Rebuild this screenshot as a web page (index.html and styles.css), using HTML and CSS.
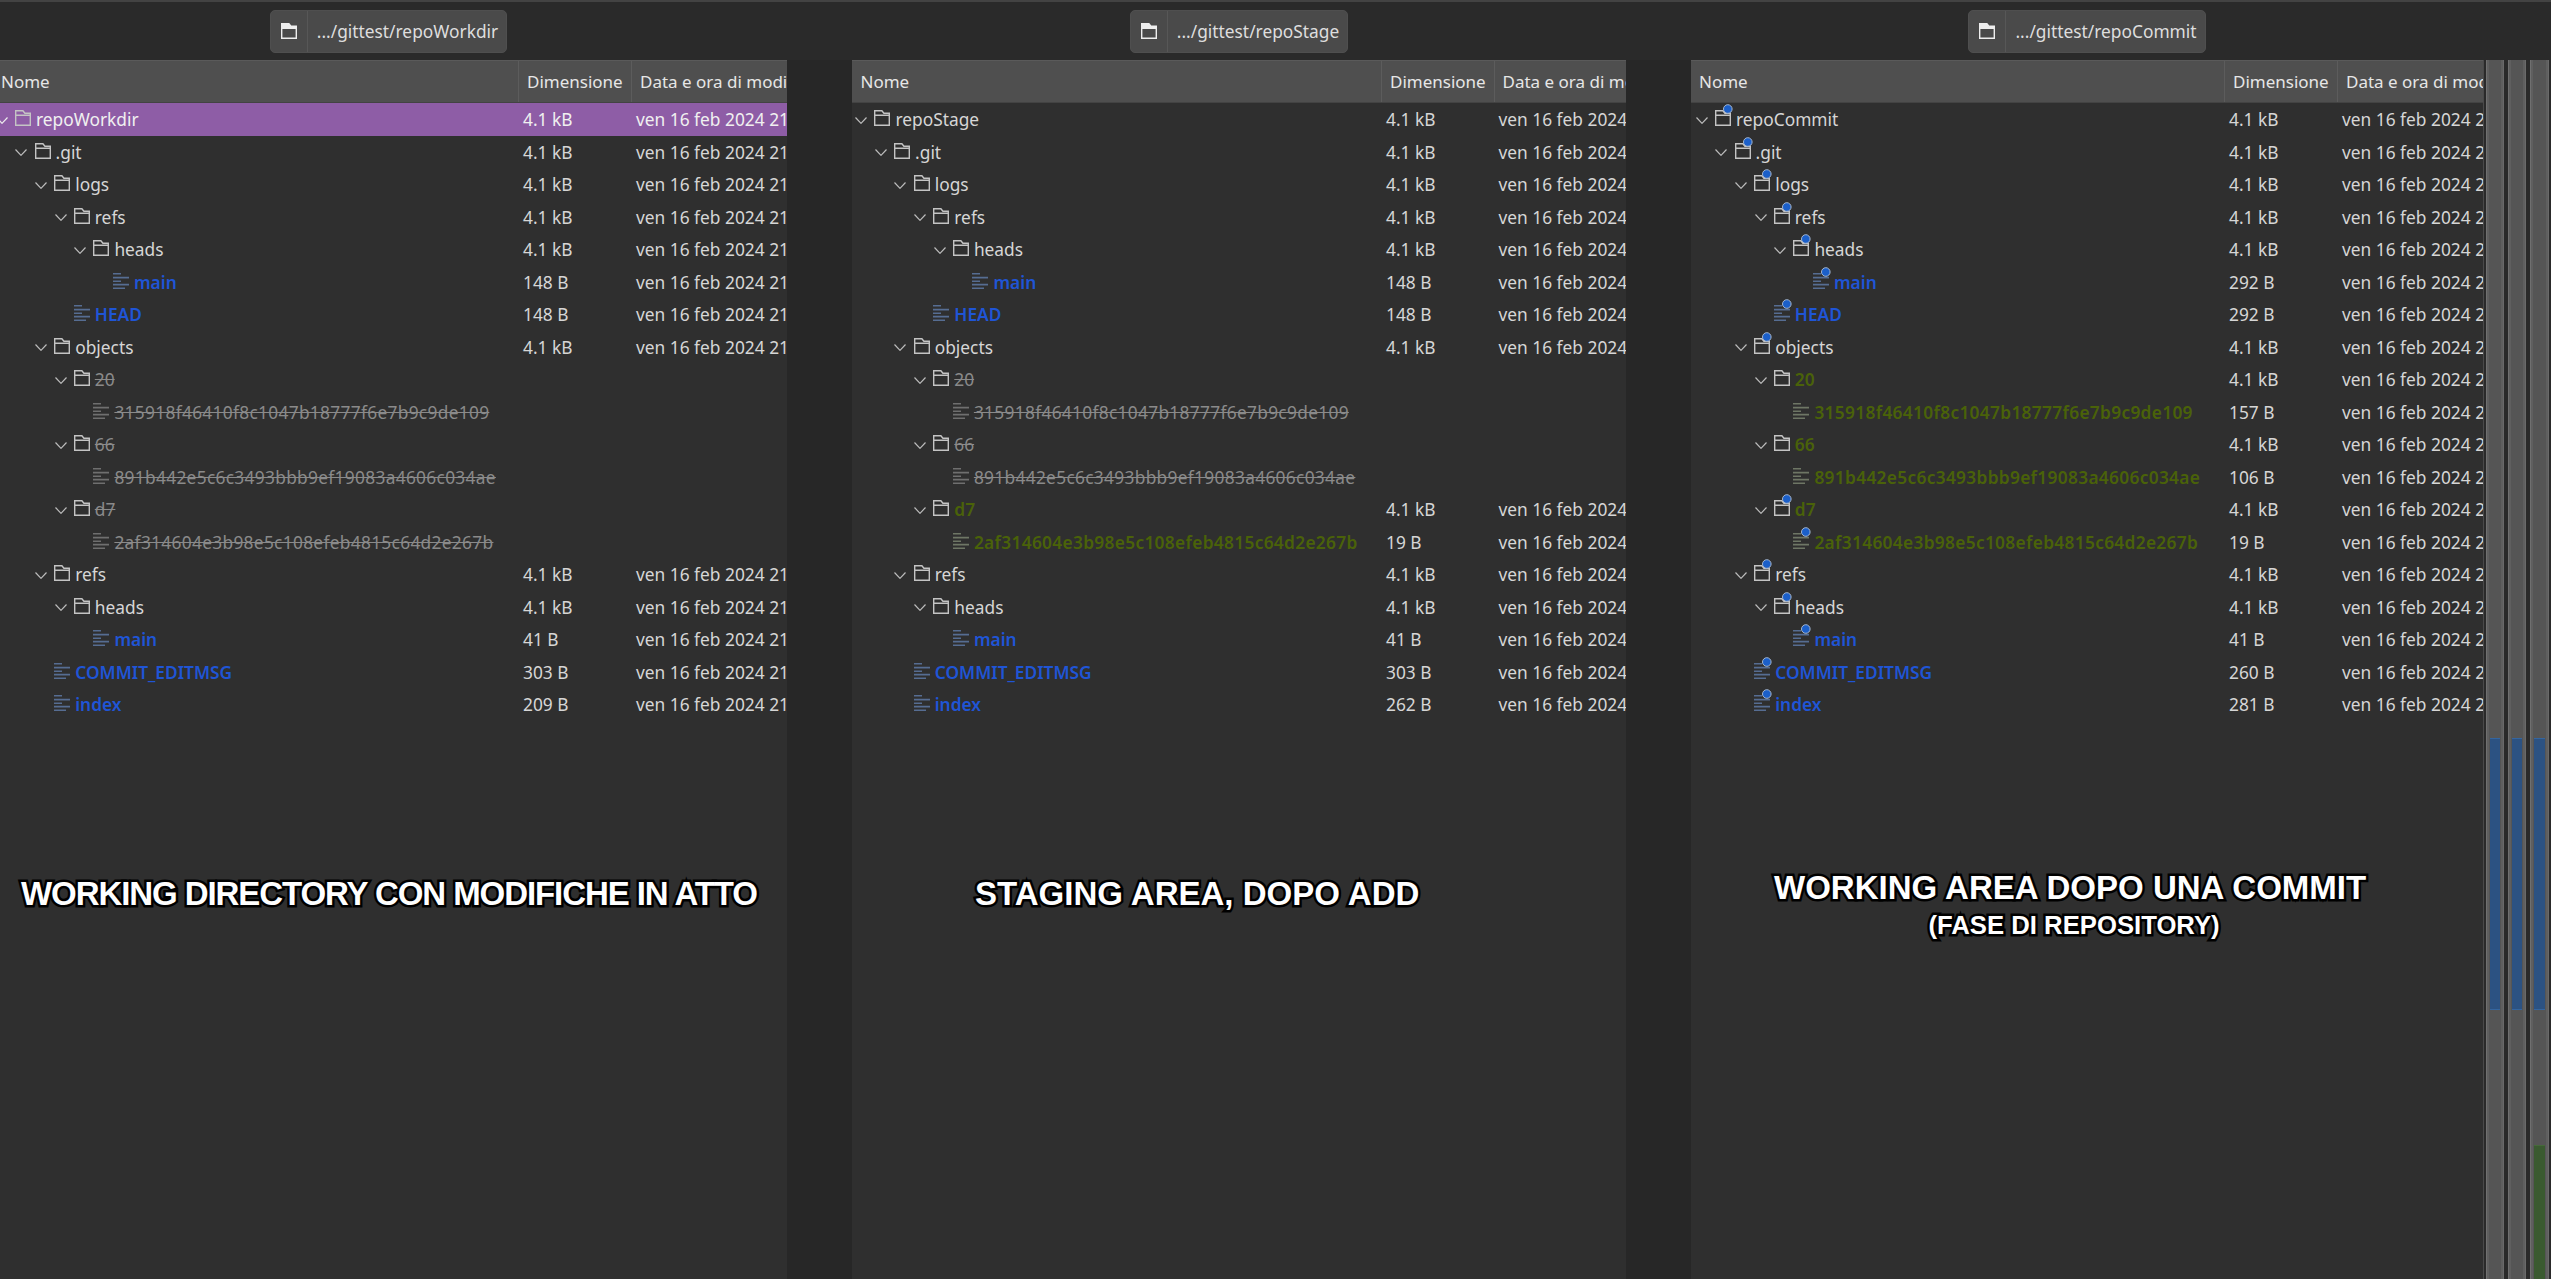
FILE: index.html
```html
<!DOCTYPE html>
<html lang="it">

<head>
    <meta charset="UTF-8">
    <meta name="viewport" content="width=device-width, initial-scale=1.0">
    <title>Confronto cartelle git</title>
    <link rel="stylesheet" href="styles.css">
</head>

<body>
    <svg class="defs" width="0" height="0">
        <symbol id="chev" viewBox="0 0 12 7"><path d="M.5.5 6 6.3 11.5.5" fill="none" stroke="currentColor" stroke-width="1.2"/></symbol>
        <symbol id="folder" viewBox="0 0 16 16" overflow="visible"><path d="M.7 15.3V.7h7.2l2 2.6h5.4v12zM.7 5.2h14.6" fill="none" stroke="currentColor" stroke-width="1.4"/></symbol>
        <symbol id="file" viewBox="0 0 16 16" overflow="visible"><path d="M0 .8h8M0 4.6h16M0 8.2h8M0 11.6h16M0 15.2h12" fill="none" stroke="currentColor" stroke-width="1.6"/></symbol>
        <symbol id="dot" viewBox="0 0 16 16" overflow="visible"><circle cx="12.8" cy="-1" r="4.3" fill="#1b5fc9" stroke="#a4b6cf" stroke-width="1"/></symbol>
        <symbol id="place" viewBox="0 0 16 16"><path d="M.7 15.3V.7h7.2l2 2.6h5.4v12z" fill="none" stroke="#eee" stroke-width="1.4"/><path d="M1 1h7l2 2.6h5V6H1z" fill="#eee"/></symbol>
    </svg>

    <div class="app">
        <div class="path-cell">
            <div class="path-btn"><span class="path-ico"><svg><use href="#place"/></svg></span><span class="path-text">.../gittest/repoWorkdir</span></div>
        </div>
        <div class="gutter-top"></div>
        <div class="path-cell">
            <div class="path-btn"><span class="path-ico"><svg><use href="#place"/></svg></span><span class="path-text">.../gittest/repoStage</span></div>
        </div>
        <div class="gutter-top"></div>
        <div class="path-cell">
            <div class="path-btn"><span class="path-ico"><svg><use href="#place"/></svg></span><span class="path-text">.../gittest/repoCommit</span></div>
        </div>
        <div class="gutter-top"></div>

        <!-- working dir -->
        <section class="pane pane-work">
            <div class="row head"><div>Nome</div><div>Dimensione</div><div>Data e ora di modifica</div></div>
            <div class="row selected"><div class="name d0"><span class="twisty"><svg><use href="#chev"/></svg></span><svg class="ico"><use href="#folder"/></svg><span>repoWorkdir</span></div><div class="size">4.1 kB</div><div class="date">ven 16 feb 2024 21</div></div>
            <div class="row"><div class="name d1"><span class="twisty"><svg><use href="#chev"/></svg></span><svg class="ico"><use href="#folder"/></svg><span>.git</span></div><div class="size">4.1 kB</div><div class="date">ven 16 feb 2024 21</div></div>
            <div class="row"><div class="name d2"><span class="twisty"><svg><use href="#chev"/></svg></span><svg class="ico"><use href="#folder"/></svg><span>logs</span></div><div class="size">4.1 kB</div><div class="date">ven 16 feb 2024 21</div></div>
            <div class="row"><div class="name d3"><span class="twisty"><svg><use href="#chev"/></svg></span><svg class="ico"><use href="#folder"/></svg><span>refs</span></div><div class="size">4.1 kB</div><div class="date">ven 16 feb 2024 21</div></div>
            <div class="row"><div class="name d4"><span class="twisty"><svg><use href="#chev"/></svg></span><svg class="ico"><use href="#folder"/></svg><span>heads</span></div><div class="size">4.1 kB</div><div class="date">ven 16 feb 2024 21</div></div>
            <div class="row"><div class="name d5 ignored"><span class="twisty"></span><svg class="ico"><use href="#file"/></svg><span>main</span></div><div class="size">148 B</div><div class="date">ven 16 feb 2024 21</div></div>
            <div class="row"><div class="name d3 ignored"><span class="twisty"></span><svg class="ico"><use href="#file"/></svg><span>HEAD</span></div><div class="size">148 B</div><div class="date">ven 16 feb 2024 21</div></div>
            <div class="row"><div class="name d2"><span class="twisty"><svg><use href="#chev"/></svg></span><svg class="ico"><use href="#folder"/></svg><span>objects</span></div><div class="size">4.1 kB</div><div class="date">ven 16 feb 2024 21</div></div>
            <div class="row"><div class="name d3 gone"><span class="twisty"><svg><use href="#chev"/></svg></span><svg class="ico"><use href="#folder"/></svg><span>20</span></div></div>
            <div class="row"><div class="name d4 gone"><span class="twisty"></span><svg class="ico"><use href="#file"/></svg><span class="hash">315918f46410f8c1047b18777f6e7b9c9de109</span></div></div>
            <div class="row"><div class="name d3 gone"><span class="twisty"><svg><use href="#chev"/></svg></span><svg class="ico"><use href="#folder"/></svg><span>66</span></div></div>
            <div class="row"><div class="name d4 gone"><span class="twisty"></span><svg class="ico"><use href="#file"/></svg><span class="hash">891b442e5c6c3493bbb9ef19083a4606c034ae</span></div></div>
            <div class="row"><div class="name d3 gone"><span class="twisty"><svg><use href="#chev"/></svg></span><svg class="ico"><use href="#folder"/></svg><span>d7</span></div></div>
            <div class="row"><div class="name d4 gone"><span class="twisty"></span><svg class="ico"><use href="#file"/></svg><span class="hash">2af314604e3b98e5c108efeb4815c64d2e267b</span></div></div>
            <div class="row"><div class="name d2"><span class="twisty"><svg><use href="#chev"/></svg></span><svg class="ico"><use href="#folder"/></svg><span>refs</span></div><div class="size">4.1 kB</div><div class="date">ven 16 feb 2024 21</div></div>
            <div class="row"><div class="name d3"><span class="twisty"><svg><use href="#chev"/></svg></span><svg class="ico"><use href="#folder"/></svg><span>heads</span></div><div class="size">4.1 kB</div><div class="date">ven 16 feb 2024 21</div></div>
            <div class="row"><div class="name d4 ignored"><span class="twisty"></span><svg class="ico"><use href="#file"/></svg><span>main</span></div><div class="size">41 B</div><div class="date">ven 16 feb 2024 21</div></div>
            <div class="row"><div class="name d2 ignored"><span class="twisty"></span><svg class="ico"><use href="#file"/></svg><span>COMMIT_EDITMSG</span></div><div class="size">303 B</div><div class="date">ven 16 feb 2024 21</div></div>
            <div class="row"><div class="name d2 ignored"><span class="twisty"></span><svg class="ico"><use href="#file"/></svg><span>index</span></div><div class="size">209 B</div><div class="date">ven 16 feb 2024 21</div></div>
            <div class="caption cap-work">WORKING DIRECTORY CON MODIFICHE IN ATTO</div>
        </section>
        <div class="gutter"></div>

        <!-- stage -->
        <section class="pane pane-stage">
            <div class="row head"><div>Nome</div><div>Dimensione</div><div>Data e ora di modifica</div></div>
            <div class="row"><div class="name d0"><span class="twisty"><svg><use href="#chev"/></svg></span><svg class="ico"><use href="#folder"/></svg><span>repoStage</span></div><div class="size">4.1 kB</div><div class="date">ven 16 feb 2024 21</div></div>
            <div class="row"><div class="name d1"><span class="twisty"><svg><use href="#chev"/></svg></span><svg class="ico"><use href="#folder"/></svg><span>.git</span></div><div class="size">4.1 kB</div><div class="date">ven 16 feb 2024 21</div></div>
            <div class="row"><div class="name d2"><span class="twisty"><svg><use href="#chev"/></svg></span><svg class="ico"><use href="#folder"/></svg><span>logs</span></div><div class="size">4.1 kB</div><div class="date">ven 16 feb 2024 21</div></div>
            <div class="row"><div class="name d3"><span class="twisty"><svg><use href="#chev"/></svg></span><svg class="ico"><use href="#folder"/></svg><span>refs</span></div><div class="size">4.1 kB</div><div class="date">ven 16 feb 2024 21</div></div>
            <div class="row"><div class="name d4"><span class="twisty"><svg><use href="#chev"/></svg></span><svg class="ico"><use href="#folder"/></svg><span>heads</span></div><div class="size">4.1 kB</div><div class="date">ven 16 feb 2024 21</div></div>
            <div class="row"><div class="name d5 ignored"><span class="twisty"></span><svg class="ico"><use href="#file"/></svg><span>main</span></div><div class="size">148 B</div><div class="date">ven 16 feb 2024 21</div></div>
            <div class="row"><div class="name d3 ignored"><span class="twisty"></span><svg class="ico"><use href="#file"/></svg><span>HEAD</span></div><div class="size">148 B</div><div class="date">ven 16 feb 2024 21</div></div>
            <div class="row"><div class="name d2"><span class="twisty"><svg><use href="#chev"/></svg></span><svg class="ico"><use href="#folder"/></svg><span>objects</span></div><div class="size">4.1 kB</div><div class="date">ven 16 feb 2024 21</div></div>
            <div class="row"><div class="name d3 gone"><span class="twisty"><svg><use href="#chev"/></svg></span><svg class="ico"><use href="#folder"/></svg><span>20</span></div></div>
            <div class="row"><div class="name d4 gone"><span class="twisty"></span><svg class="ico"><use href="#file"/></svg><span class="hash">315918f46410f8c1047b18777f6e7b9c9de109</span></div></div>
            <div class="row"><div class="name d3 gone"><span class="twisty"><svg><use href="#chev"/></svg></span><svg class="ico"><use href="#folder"/></svg><span>66</span></div></div>
            <div class="row"><div class="name d4 gone"><span class="twisty"></span><svg class="ico"><use href="#file"/></svg><span class="hash">891b442e5c6c3493bbb9ef19083a4606c034ae</span></div></div>
            <div class="row"><div class="name d3 added"><span class="twisty"><svg><use href="#chev"/></svg></span><svg class="ico"><use href="#folder"/></svg><span>d7</span></div><div class="size">4.1 kB</div><div class="date">ven 16 feb 2024 21</div></div>
            <div class="row"><div class="name d4 added"><span class="twisty"></span><svg class="ico"><use href="#file"/></svg><span class="hash">2af314604e3b98e5c108efeb4815c64d2e267b</span></div><div class="size">19 B</div><div class="date">ven 16 feb 2024 21</div></div>
            <div class="row"><div class="name d2"><span class="twisty"><svg><use href="#chev"/></svg></span><svg class="ico"><use href="#folder"/></svg><span>refs</span></div><div class="size">4.1 kB</div><div class="date">ven 16 feb 2024 21</div></div>
            <div class="row"><div class="name d3"><span class="twisty"><svg><use href="#chev"/></svg></span><svg class="ico"><use href="#folder"/></svg><span>heads</span></div><div class="size">4.1 kB</div><div class="date">ven 16 feb 2024 21</div></div>
            <div class="row"><div class="name d4 ignored"><span class="twisty"></span><svg class="ico"><use href="#file"/></svg><span>main</span></div><div class="size">41 B</div><div class="date">ven 16 feb 2024 21</div></div>
            <div class="row"><div class="name d2 ignored"><span class="twisty"></span><svg class="ico"><use href="#file"/></svg><span>COMMIT_EDITMSG</span></div><div class="size">303 B</div><div class="date">ven 16 feb 2024 21</div></div>
            <div class="row"><div class="name d2 ignored"><span class="twisty"></span><svg class="ico"><use href="#file"/></svg><span>index</span></div><div class="size">262 B</div><div class="date">ven 16 feb 2024 21</div></div>
            <div class="caption cap-stage">STAGING AREA, DOPO ADD</div>
        </section>
        <div class="gutter"></div>

        <!-- commit, quasi tutto con il pallino blu -->
        <section class="pane pane-commit">
            <div class="row head"><div>Nome</div><div>Dimensione</div><div>Data e ora di modifica</div></div>
            <div class="row"><div class="name d0"><span class="twisty"><svg><use href="#chev"/></svg></span><svg class="ico"><use href="#folder"/><use href="#dot"/></svg><span>repoCommit</span></div><div class="size">4.1 kB</div><div class="date">ven 16 feb 2024 21</div></div>
            <div class="row"><div class="name d1"><span class="twisty"><svg><use href="#chev"/></svg></span><svg class="ico"><use href="#folder"/><use href="#dot"/></svg><span>.git</span></div><div class="size">4.1 kB</div><div class="date">ven 16 feb 2024 21</div></div>
            <div class="row"><div class="name d2"><span class="twisty"><svg><use href="#chev"/></svg></span><svg class="ico"><use href="#folder"/><use href="#dot"/></svg><span>logs</span></div><div class="size">4.1 kB</div><div class="date">ven 16 feb 2024 21</div></div>
            <div class="row"><div class="name d3"><span class="twisty"><svg><use href="#chev"/></svg></span><svg class="ico"><use href="#folder"/><use href="#dot"/></svg><span>refs</span></div><div class="size">4.1 kB</div><div class="date">ven 16 feb 2024 21</div></div>
            <div class="row"><div class="name d4"><span class="twisty"><svg><use href="#chev"/></svg></span><svg class="ico"><use href="#folder"/><use href="#dot"/></svg><span>heads</span></div><div class="size">4.1 kB</div><div class="date">ven 16 feb 2024 21</div></div>
            <div class="row"><div class="name d5 ignored"><span class="twisty"></span><svg class="ico"><use href="#file"/><use href="#dot"/></svg><span>main</span></div><div class="size">292 B</div><div class="date">ven 16 feb 2024 21</div></div>
            <div class="row"><div class="name d3 ignored"><span class="twisty"></span><svg class="ico"><use href="#file"/><use href="#dot"/></svg><span>HEAD</span></div><div class="size">292 B</div><div class="date">ven 16 feb 2024 21</div></div>
            <div class="row"><div class="name d2"><span class="twisty"><svg><use href="#chev"/></svg></span><svg class="ico"><use href="#folder"/><use href="#dot"/></svg><span>objects</span></div><div class="size">4.1 kB</div><div class="date">ven 16 feb 2024 21</div></div>
            <div class="row"><div class="name d3 added"><span class="twisty"><svg><use href="#chev"/></svg></span><svg class="ico"><use href="#folder"/></svg><span>20</span></div><div class="size">4.1 kB</div><div class="date">ven 16 feb 2024 21</div></div>
            <div class="row"><div class="name d4 added"><span class="twisty"></span><svg class="ico"><use href="#file"/></svg><span class="hash">315918f46410f8c1047b18777f6e7b9c9de109</span></div><div class="size">157 B</div><div class="date">ven 16 feb 2024 21</div></div>
            <div class="row"><div class="name d3 added"><span class="twisty"><svg><use href="#chev"/></svg></span><svg class="ico"><use href="#folder"/></svg><span>66</span></div><div class="size">4.1 kB</div><div class="date">ven 16 feb 2024 21</div></div>
            <div class="row"><div class="name d4 added"><span class="twisty"></span><svg class="ico"><use href="#file"/></svg><span class="hash">891b442e5c6c3493bbb9ef19083a4606c034ae</span></div><div class="size">106 B</div><div class="date">ven 16 feb 2024 21</div></div>
            <div class="row"><div class="name d3 added"><span class="twisty"><svg><use href="#chev"/></svg></span><svg class="ico"><use href="#folder"/><use href="#dot"/></svg><span>d7</span></div><div class="size">4.1 kB</div><div class="date">ven 16 feb 2024 21</div></div>
            <div class="row"><div class="name d4 added"><span class="twisty"></span><svg class="ico"><use href="#file"/><use href="#dot"/></svg><span class="hash">2af314604e3b98e5c108efeb4815c64d2e267b</span></div><div class="size">19 B</div><div class="date">ven 16 feb 2024 21</div></div>
            <div class="row"><div class="name d2"><span class="twisty"><svg><use href="#chev"/></svg></span><svg class="ico"><use href="#folder"/><use href="#dot"/></svg><span>refs</span></div><div class="size">4.1 kB</div><div class="date">ven 16 feb 2024 21</div></div>
            <div class="row"><div class="name d3"><span class="twisty"><svg><use href="#chev"/></svg></span><svg class="ico"><use href="#folder"/><use href="#dot"/></svg><span>heads</span></div><div class="size">4.1 kB</div><div class="date">ven 16 feb 2024 21</div></div>
            <div class="row"><div class="name d4 ignored"><span class="twisty"></span><svg class="ico"><use href="#file"/><use href="#dot"/></svg><span>main</span></div><div class="size">41 B</div><div class="date">ven 16 feb 2024 21</div></div>
            <div class="row"><div class="name d2 ignored"><span class="twisty"></span><svg class="ico"><use href="#file"/><use href="#dot"/></svg><span>COMMIT_EDITMSG</span></div><div class="size">260 B</div><div class="date">ven 16 feb 2024 21</div></div>
            <div class="row"><div class="name d2 ignored"><span class="twisty"></span><svg class="ico"><use href="#file"/><use href="#dot"/></svg><span>index</span></div><div class="size">281 B</div><div class="date">ven 16 feb 2024 21</div></div>
            <div class="caption cap-commit">WORKING AREA DOPO UNA COMMIT<small>(FASE DI REPOSITORY)</small></div>
        </section>

        <div class="scrolls">
            <div class="track"><div class="thumb"></div></div>
            <div class="track"><div class="thumb"></div></div>
            <div class="track track-last"><div class="thumb"></div><div class="thumb-green"></div></div>
        </div>
    </div>
</body>

</html>
```

FILE: styles.css
```css
html,
body {
    margin: 0;
    height: 100%;
    overflow: hidden;
}

body {
    font-family: "Noto Sans", sans-serif;
    font-size: 17.33px;
    color: #d6d6d6;
    background: #2a2a2a;
}

.defs {
    position: absolute;
}

svg {
    overflow: visible;
    display: block;
}

.app {
    height: 1279px;
    box-sizing: border-box;
    border-top: 2px solid #434343;
    display: grid;
    grid-template-columns: 787px 65px 774px 65px 792px 1fr;
    grid-template-rows: 58px 1fr;
}

.path-cell {
    display: flex;
    justify-content: center;
    align-items: center;
}

.path-cell:first-child {
    margin-left: -10px;
}

.path-btn {
    height: 43px;
    box-sizing: border-box;
    display: flex;
    align-items: center;
    background: #4a4a4a;
    border: 1px solid #4f4f4f;
    border-radius: 5px;
}

.path-ico {
    width: 36px;
    height: 100%;
    display: flex;
    justify-content: center;
    align-items: center;
    border-right: 1px solid #575757;
}

.path-ico svg {
    width: 16px;
    height: 16px;
}

.path-text {
    padding: 0 8px 0 9px;
    color: #dedede;
}

.pane {
    position: relative;
    overflow: hidden;
    background: #2f2f2f;
}

.gutter {
    background: #272727;
}

.row {
    display: grid;
    height: 32.5px;
    align-items: center;
    white-space: nowrap;
}

.pane-work .row {
    grid-template-columns: 527px 113px 1fr;
    margin-left: -9px;
}

.pane-stage .row {
    grid-template-columns: 530.5px 112.5px 1fr;
    margin-left: -1.5px;
}

.pane-commit .row {
    grid-template-columns: 533px 113px 1fr;
}

.row.head {
    height: 43px;
    box-sizing: border-box;
    background: #4f4f4f;
    border-top: 1px solid #5a5a5a;
    border-bottom: 1px solid #434343;
    color: #e6e6e6;
    font-size: 17px;
    align-items: stretch;
}

.head > div {
    display: flex;
    align-items: center;
    padding-left: 8px;
    overflow: hidden;
}

.pane-work .head > div:first-child,
.pane-stage .head > div:first-child {
    padding-left: 10px;
}

.head > div + div {
    border-left: 1px solid #5c5c5c;
}

.selected {
    background: #8e5da6;
    color: #f0f0f0;
}

.selected .twisty {
    color: #eee;
}

.name {
    display: flex;
    align-items: center;
}

.d0 { padding-left: 4.7px; }
.d1 { padding-left: 24.3px; }
.d2 { padding-left: 43.9px; }
.d3 { padding-left: 63.5px; }
.d4 { padding-left: 83.1px; }
.d5 { padding-left: 102.7px; }

.twisty {
    flex: none;
    width: 12px;
    height: 7px;
    margin: 2px 7.3px 0 0;
    color: #bdbdbd;
}

.twisty svg {
    width: 12px;
    height: 7px;
}

.ico {
    flex: none;
    width: 16px;
    height: 16px;
    margin: -2px 5px 0 0;
    color: #c4c4c4;
}

/* gli hash nel riferimento hanno cifre un po' piu larghe */
.hash {
    letter-spacing: .3px;
}

.ignored span:last-child {
    color: #1f55d6;
    font-weight: 600;
}

.ignored .ico {
    color: #566d92;
}

.gone span:last-child {
    color: #8a8a8a;
    text-decoration: line-through;
}

.gone use[href="#file"] {
    color: #6f6f6f;
}

.added span:last-child {
    color: #4a6209;
    font-weight: 600;
}

.added use[href="#file"] {
    color: #6e7665;
}

.size,
.date {
    padding-left: 5px;
    overflow: hidden;
}

.caption {
    position: absolute;
    font-family: "Liberation Sans", sans-serif;
    font-weight: 700;
    font-size: 33px;
    line-height: 36px;
    color: #fff;
    -webkit-text-stroke: 5px #000;
    paint-order: stroke fill;
    white-space: nowrap;
    text-align: center;
}

.caption small {
    display: block;
    margin-top: 4px;
    padding-left: 8px;
    font-size: 25.7px;
    line-height: 30px;
}

.cap-work {
    left: 21px;
    top: 816px;
    letter-spacing: -1.08px;
}

.cap-stage {
    left: 123px;
    top: 816px;
}

.cap-commit {
    left: 83px;
    top: 810px;
}

.scrolls {
    display: flex;
    gap: 4px;
    padding-left: 2px;
    background: #2a2a2a;
    border-left: 1px solid #4a4a4a;
}

.track {
    position: relative;
    width: 18px;
    box-sizing: border-box;
    background: #555;
    border-left: 1px solid #707070;
    border-right: 1px solid #6a6a6a;
    box-shadow: inset 2px 0 0 #5f5f5f, inset -2px 0 0 #5f5f5f;
}

.track-last {
    width: 19px;
}

.thumb,
.thumb-green {
    position: absolute;
    left: 3px;
    right: 3px;
}

.thumb {
    top: 678px;
    height: 272px;
    background: #2c5282;
    border-top: 1px solid #34659f;
    border-bottom: 1px solid #34659f;
    box-sizing: border-box;
}

.thumb-green {
    top: 1085px;
    bottom: 0;
    background: #3a5a30;
    border-top: 1px solid #466a3a;
}
```
